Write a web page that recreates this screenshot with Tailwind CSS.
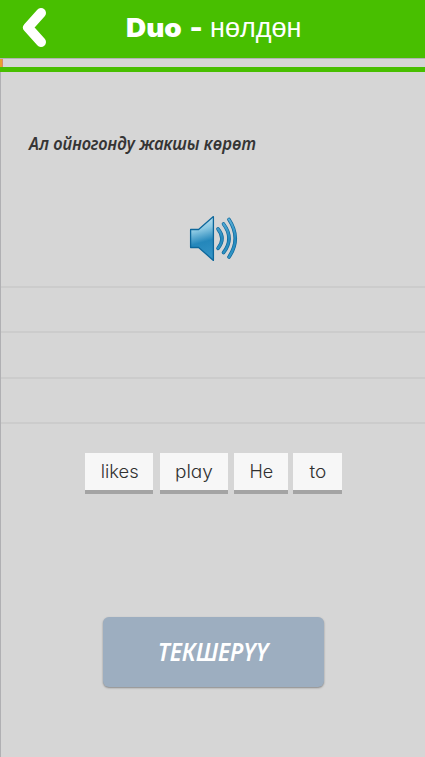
<!DOCTYPE html>
<html lang="ky">
<head>
<meta charset="utf-8">
<title>Duo - нөлдөн</title>
<script src="https://cdn.jsdelivr.net/npm/@tailwindcss/browser@4"></script>
</head>
<body class="bg-[#d6d6d6]">
<div class="w-[425px] h-[757px] overflow-hidden flex flex-col">
  <header class="h-[58px] shrink-0 bg-[#48bf00] flex items-start text-white">
    <svg class="w-12 h-[58px] shrink-0" viewBox="0 0 48 58" fill="none" stroke="#fff" stroke-width="10" stroke-linecap="round" stroke-linejoin="round"><path d="M41 13L28 27.5L41 42"/></svg>
    <h1 class="pl-[78px] pt-[8px] h-10 flex items-baseline whitespace-nowrap">
      <span class="w-[84px] shrink-0"><span class="inline-block origin-left scale-x-[1.075] font-['Inter',sans-serif] font-black text-[26px] leading-10 [word-spacing:2px]">Duo -</span></span>
      <span class="inline-block origin-left scale-x-[0.965] font-['Liberation_Sans',sans-serif] text-[28px] leading-10">нөлдөн</span>
    </h1>
  </header>
  <div class="h-[9px] shrink-0 border-t border-[#b3b3b3]"><div class="w-[3px] h-2 bg-[#e8a02e] border-r border-[#d98a66]"></div></div>
  <div class="h-[5px] shrink-0 bg-[#48bf00]"></div>
  <main class="flex-1 flex flex-col border-l border-[#b0b0b3]">
  <p class="h-[143px] shrink-0 pl-[28px] pt-[57px]"><span class="inline-block origin-left scale-x-[0.914] whitespace-nowrap font-['Noto_Sans','Open_Sans',sans-serif] italic font-semibold text-[18px] leading-7 text-[#353535]">Ал ойногонду жакшы көрөт</span></p>
  <div class="h-[71px] shrink-0 pl-[188px]">
    <svg class="w-[52px] h-[48px]" viewBox="189 215 52 48">
      <defs>
        <linearGradient id="g" x1="0" y1="0" x2="0.15" y2="1"><stop offset="0" stop-color="#d5edf7"/><stop offset=".35" stop-color="#8cc9e3"/><stop offset=".65" stop-color="#2487bb"/><stop offset="1" stop-color="#3292c4"/></linearGradient>
        <linearGradient id="w" gradientUnits="userSpaceOnUse" x1="0" y1="217" x2="0" y2="260"><stop offset="0" stop-color="#62b5db"/><stop offset=".5" stop-color="#2589bd"/><stop offset="1" stop-color="#3498c7"/></linearGradient>
      </defs>
      <path d="M190.6 229.5H198.6L213.4 216.6V260.4L198.6 247.5H190.6Z" fill="url(#g)" stroke="#0d679b" stroke-width="1.3" stroke-linejoin="round"/>
      <g fill="none" stroke-linecap="round">
        <g stroke="#0d679b" stroke-width="3.6"><path d="M218 229Q226 238.5 218 248.3"/><path d="M223.5 224Q234.5 238.5 223.5 252.7"/><path d="M229 219.5Q241.5 238.5 229 257"/></g>
        <g stroke="url(#w)" stroke-width="2.2"><path d="M218 229Q226 238.5 218 248.3"/><path d="M223.5 224Q234.5 238.5 223.5 252.7"/><path d="M229 219.5Q241.5 238.5 229 257"/></g>
      </g>
    </svg>
  </div>
  <div class="shrink-0 flex flex-col">
    <div class="h-[45px] border-t-2 border-[#cccccc]"></div>
    <div class="h-[46px] border-t-2 border-[#cccccc]"></div>
    <div class="h-[45px] border-t-2 border-[#cccccc]"></div>
    <div class="h-[31px] border-t-2 border-[#cccccc]"></div>
  </div>
  <div class="shrink-0 h-[164px] pl-[84.4px] flex items-start font-['Inter',sans-serif] font-light [font-feature-settings:'cv11'] text-[18px] leading-[37px] text-[#303030] text-center">
    <div class="w-[68px] mr-[7px] h-[41px] bg-[#f7f7f7] border-b-4 border-[#a4a4a4]"><span class="inline-block scale-x-[1.02]">likes</span></div>
    <div class="w-[68px] mr-[6px] h-[41px] bg-[#f7f7f7] border-b-4 border-[#a4a4a4]"><span class="inline-block scale-x-[1.06]">play</span></div>
    <div class="w-[54px] mr-[5px] h-[41px] bg-[#f7f7f7] border-b-4 border-[#a4a4a4]">He</div>
    <div class="w-[49px] h-[41px] bg-[#f7f7f7] border-b-4 border-[#a4a4a4]"><span class="inline-block scale-x-[1.06]">to</span></div>
  </div>
  <button class="shrink-0 ml-[102px] w-[221px] h-[70px] rounded-[6px] bg-[#9daec0] shadow-[0_1px_2px_#888] text-white font-['Noto_Sans','Open_Sans',sans-serif] italic font-semibold text-[25px] flex items-center justify-center"><span class="scale-x-[0.92] whitespace-nowrap">ТЕКШЕРҮҮ</span></button>
  </main>
</div>
</body>
</html>
